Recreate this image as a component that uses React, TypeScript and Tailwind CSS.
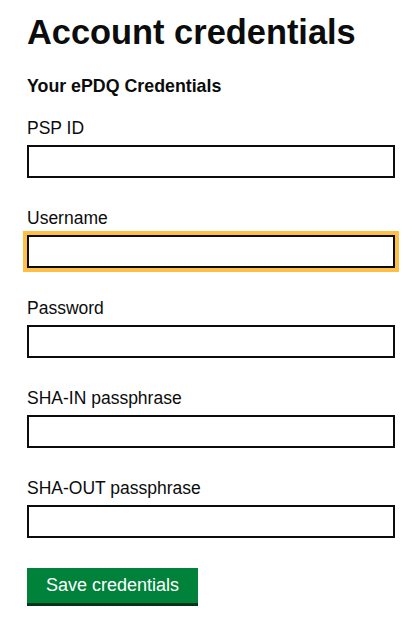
import React from 'react';

const fields = [
  { id: 'psp-id', label: 'PSP ID', focused: false },
  { id: 'username', label: 'Username', focused: true },
  { id: 'password', label: 'Password', focused: false },
  { id: 'sha-in', label: 'SHA-IN passphrase', focused: false },
  { id: 'sha-out', label: 'SHA-OUT passphrase', focused: false },
];

export default function App() {
  return (
    <div className="min-h-screen bg-white pl-[27px] pr-[25px] pt-3 text-[#0b0c0c] font-['Liberation_Sans',Arial,sans-serif]">
      <h1 className="text-[34.4px] leading-[40px] font-bold">Account credentials</h1>
      <h2 className="mt-[22px] text-[17.8px] leading-[24px] font-bold">Your ePDQ Credentials</h2>
      <form className="mt-[18px] flex flex-col">
        {fields.map((f) => (
          <div key={f.id} className="mb-[28px] flex flex-col">
            <label htmlFor={f.id} className="text-[17.5px] leading-[24px]">
              {f.label}
            </label>
            <input
              id={f.id}
              type={f.id === 'password' ? 'password' : 'text'}
              className={`mt-[5px] h-[33px] w-full border-2 border-[#0b0c0c] bg-white px-1 text-[17px] outline-none ${
                f.focused ? 'ring-4 ring-[#ffbf47]' : ''
              }`}
            />
          </div>
        ))}
        <div className="mt-[2px]">
          <button
            type="button"
            className="h-[35px] bg-[#00823b] px-[19px] text-[18px] leading-[35px] text-white shadow-[0_3px_0_#003618]"
          >
            Save credentials
          </button>
        </div>
      </form>
    </div>
  );
}
